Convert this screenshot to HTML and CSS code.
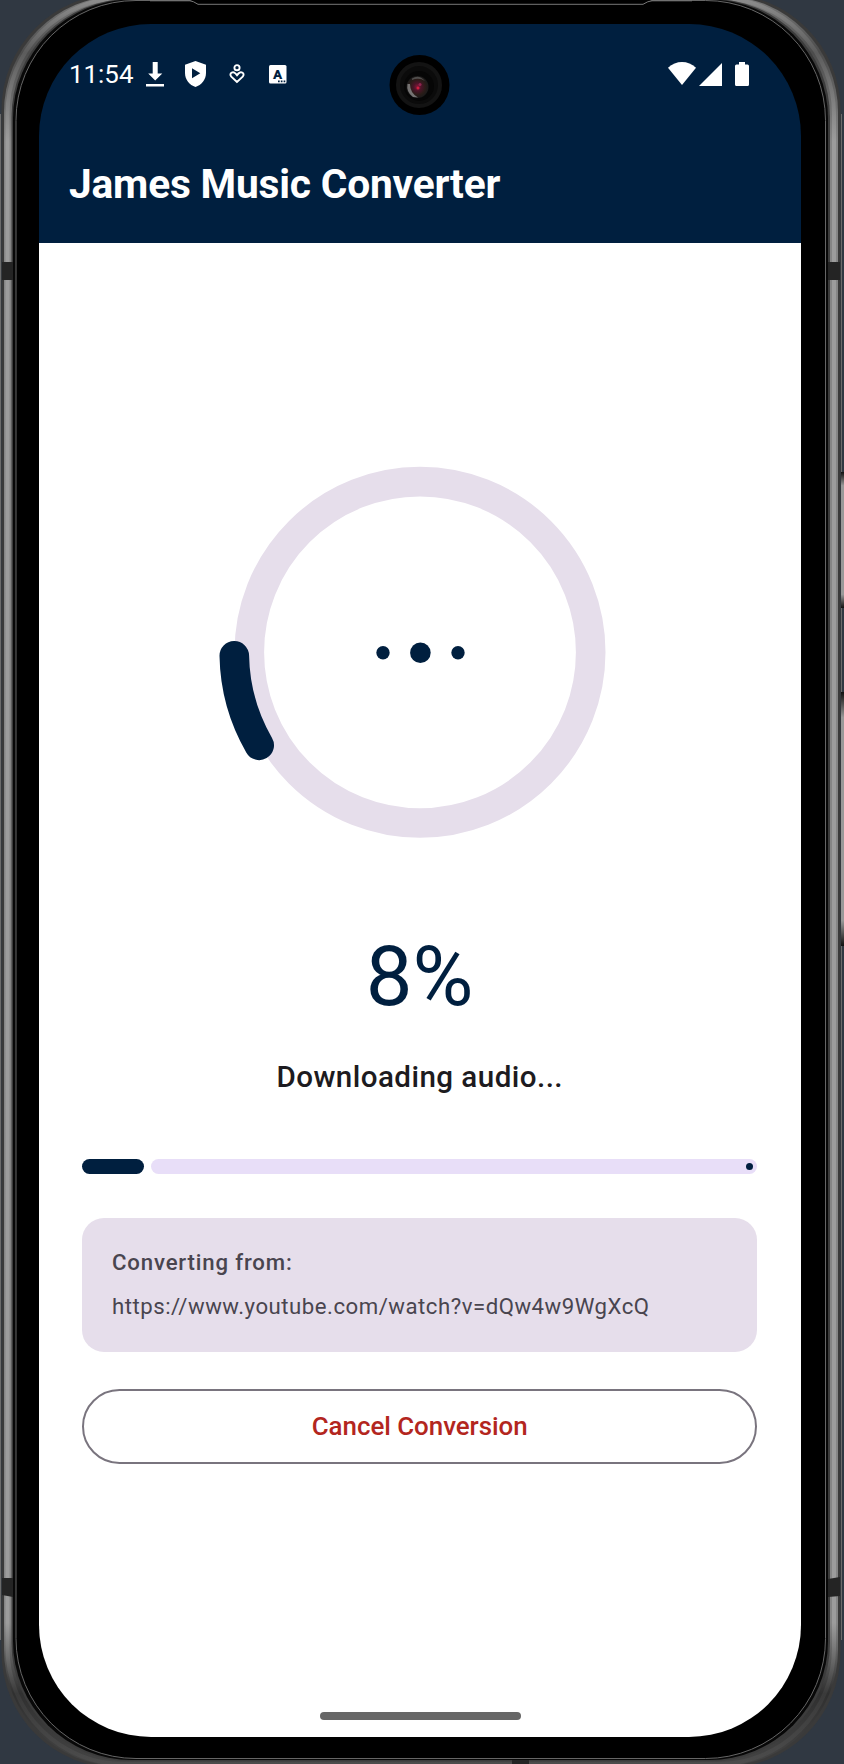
FILE: index.html
```html
<!DOCTYPE html>
<html lang="en">
<head>
<meta charset="utf-8">
<title>James Music Converter</title>
<link rel="stylesheet" href="styles.css">
</head>
<body>
<div class="phone">
  <svg class="frame" viewBox="0 0 844 1764" aria-hidden="true">
    <defs>
      <linearGradient id="metal" gradientUnits="userSpaceOnUse" x1="0" y1="0" x2="0" y2="1764">
        <stop offset="0" stop-color="#777"/><stop offset=".03" stop-color="#4c4c4c"/>
        <stop offset=".08" stop-color="#858585"/><stop offset=".92" stop-color="#858585"/>
        <stop offset=".96" stop-color="#303030"/><stop offset="1" stop-color="#444"/>
      </linearGradient>
      <linearGradient id="shine" gradientUnits="userSpaceOnUse" x1="0" y1="0" x2="0" y2="1764">
        <stop offset="0" stop-color="#8c8c8c"/><stop offset=".03" stop-color="#5c5c5c"/>
        <stop offset=".08" stop-color="#9c9c9c"/><stop offset=".92" stop-color="#9c9c9c"/>
        <stop offset=".96" stop-color="#3a3a3a"/><stop offset="1" stop-color="#4c4c4c"/>
      </linearGradient>
      <linearGradient id="button" x1="0" y1="0" x2="0" y2="1">
        <stop offset="0" stop-color="#111"/><stop offset=".1" stop-color="#999"/>
        <stop offset=".9" stop-color="#999"/><stop offset="1" stop-color="#111"/>
      </linearGradient>
    </defs>
    <path d="M.5 114V1640M841.5 114V1640" stroke="#6b6b6b"/>
    <rect x="841" y="472" width="4" height="136" fill="url(#button)"/>
    <rect x="841" y="692" width="4" height="254" fill="url(#button)"/>
    <rect x="1.5" y="-6" width="839" height="1774" rx="116" fill="#3a3a3a"/>
    <rect x="4" y="-4" width="834" height="1770" rx="116" fill="url(#metal)"/>
    <rect x="7.5" y="-2" width="826.500" height="1766" rx="116" fill="none" stroke="url(#shine)" stroke-width="4"/>
    <rect x="11.500" y="-1" width="818.500" height="1762" rx="118" fill="#3c3c3c"/>
    <rect x="13" y="-.5" width="815" height="1760.500" rx="119" fill="#080808"/>
    <rect x="16" y=".5" width="809.500" height="1758" rx="120" fill="#000" stroke="#666"/>
    <path d="M190 0l8 4H644l8-4z" fill="#000"/>
    <path d="M150 .8H190Q193 1 198 4.300H643Q648 1 652 .8H692" fill="none" stroke="#777"/>
    <path d="M2 262H13V280H2zM828 262H840V280H828zM2 1578H13V1597L2 1595zM828 1579L840 1577V1596L828 1597zM512 1760H529V1764H512z" fill="#242424"/>
  </svg>
  <div class="screen">
    <header class="app-header">
      <div class="status-bar">
        <span class="clock">11:54</span>
        <svg class="ic-download" width="18" height="25" viewBox="0 0 18 25"><path fill="#fff" d="M6.700 0h5v11.500h4.600L9.200 18.500 2.200 11.500h4.500zM0 22h18v2.600H0z"/></svg>
        <svg class="ic-shield" width="21" height="26" viewBox="0 0 21 26"><path fill="#fff" fill-rule="evenodd" d="M10.500 0 21 3.800V12C21 18.500 16.500 24 10.500 26 4.500 24 0 18.500 0 12V3.800zM7 7.300v10L15.300 12.300z"/></svg>
        <svg class="ic-wellbeing" width="16" height="20" viewBox="0 0 16 20"><g fill="none" stroke="#fff" stroke-width="1.900"><circle cx="8" cy="3.700" r="2.600"/><path d="M8 18 2.300 12.700C-.5 9.500 4 6.600 6.500 9.500L8 11.200 9.500 9.500C12 6.600 16.500 9.500 13.700 12.700z"/></g></svg>
        <svg class="ic-letter" width="18" height="19" viewBox="0 0 18 19"><rect width="17.500" height="18.500" rx="1.500" fill="#fff"/><text x="8.500" y="13.700" text-anchor="middle" class="letter">A</text><path fill="#001f3f" d="M9 15.500h1.700v1.700H9zM11.800 15.500h1.700v1.700h-1.700zM14.600 15.500h1.700v1.700h-1.700z"/></svg>
        <span class="spacer"></span>
        <svg class="ic-wifi" width="28" height="23" viewBox="0 0 28 23"><path fill="#fff" d="M0 5.700C8-1.900 20-1.900 28 5.700L14 23z"/></svg>
        <svg class="ic-signal" width="23" height="23" viewBox="0 0 23 23"><path fill="#fff" d="M23 0V23H0z"/></svg>
        <svg class="ic-battery" width="14" height="24" viewBox="0 0 14 24"><path fill="#fff" d="M4 0h6v2.400h2.500q1.500 0 1.500 1.500V22.500q0 1.500-1.500 1.500h-11Q0 24 0 22.500V3.900Q0 2.400 1.500 2.400H4z"/></svg>
      </div>
      <h1 class="title">James Music Converter</h1>
    </header>
    <main class="content">
      <svg class="ring" width="404" height="404" viewBox="0 0 404 404">
        <circle cx="202" cy="202.300" r="170.700" fill="none" stroke="#e6deeb" stroke-width="29.600"/>
        <path d="M16.300 205.800A185.500 185.500 0 0 0 41.200 295.300" fill="none" stroke="#001f3f" stroke-width="29.600" stroke-linecap="round"/>
        <g fill="#001f3f"><circle cx="165" cy="202.700" r="6.700"/><circle cx="202.400" cy="202.700" r="10.300"/><circle cx="240" cy="202.700" r="6.700"/></g>
      </svg>
      <div class="percent">8%</div>
      <div class="stage">Downloading audio...</div>
      <div class="bar"><span class="bar-done"></span><span class="bar-track"><span class="bar-stop"></span></span></div>
      <section class="card">
        <div class="card-label">Converting from:</div>
        <div class="card-url">https://www.youtube.com/watch?v=dQw4w9WgXcQ</div>
      </section>
      <button class="cancel">Cancel Conversion</button>
    </main>
    <div class="home-pill"></div>
  </div>
  <svg class="camera" width="62" height="62" viewBox="0 0 62 62" aria-hidden="true">
    <defs><radialGradient id="lens"><stop offset="0" stop-color="#8b1838"/><stop offset=".35" stop-color="#4a1428"/><stop offset=".7" stop-color="#2a1c18"/><stop offset="1" stop-color="#1a1a1a"/></radialGradient></defs>
    <circle cx="31.500" cy="31" r="30" fill="#000"/><circle cx="31" cy="31" r="21" fill="#0b0b0b" stroke="#131313" stroke-width="4"/>
    <circle cx="31" cy="32" r="15" fill="#060606"/><circle cx="29.500" cy="33" r="11" fill="url(#lens)"/>
    <path d="M19.500 30Q18 38 25 43L30 43.500Q22 39 22 30z" fill="#8a8a8a" opacity=".8"/>
    <path d="M24 24.500Q31 20 37 27Q31 23 24 26z" fill="#777" opacity=".55"/>
    <circle cx="30" cy="34" r="1.500" fill="#d21e40"/><circle cx="32" cy="30.500" r="1.500" fill="#8f2450"/>
  </svg>
</div>
</body>
</html>
```
FILE: styles.css
```css
* { box-sizing: border-box; }
body {
  margin: 0;
  background: #303842;
  font-family: Roboto, "Noto Sans", sans-serif;
}
.phone {
  position: relative;
  height: 1764px;
  padding: 24px 43px 27px 39px;
  overflow: hidden;
}
.frame {
  position: absolute;
  inset: 0;
  width: 844px;
  height: 1764px;
}
.screen {
  position: relative;
  display: flex;
  flex-direction: column;
  width: 762px;
  height: 1713px;
  border-radius: 112px;
  overflow: hidden;
  background: linear-gradient(#001f3f 219px, #fff 219px);
}
.app-header {
  height: 219px;
  padding: 0 30px;
  color: #fff;
}
.status-bar {
  display: flex;
  align-items: flex-start;
  height: 98px;
  padding: 37px 22px 0 0;
}
.status-bar svg { flex: none; }
.clock {
  width: 65px;
  font-size: 25.9px;
  line-height: 26px;
}
.ic-download { margin: 1px 0 0 12px; }
.ic-shield { margin-left: 21px; }
.ic-wellbeing { margin: 3px 0 0 23px; }
.ic-letter { margin: 4px 0 0 24px; }
.letter {
  font: 900 13.5px Roboto, sans-serif;
  fill: #001f3f;
}
.spacer { flex: 1; }
.ic-wifi { margin-top: 1px; }
.ic-signal { margin: 2px 0 0 3px; }
.ic-battery { margin: 1px 0 0 13px; }
.title {
  margin: 38px 0 0;
  font-size: 40.7px;
  line-height: 49px;
  font-weight: 700;
  letter-spacing: -0.2px;
  white-space: nowrap;
}
.content {
  display: flex;
  flex-direction: column;
  align-items: center;
  flex: 1;
  padding: 207px 44px 0 43.4px;
}
.ring { flex: none; }
.percent {
  margin-top: 75px;
  font-size: 83.2px;
  line-height: 96px;
  color: #001f3f;
}
.stage {
  margin-top: 30px;
  font-size: 29.6px;
  line-height: 44px;
  font-weight: 500;
  letter-spacing: 0.44px;
  color: #1d1b20;
}
.bar {
  display: flex;
  gap: 7.4px;
  width: 100%;
  height: 15px;
  margin-top: 60px;
}
.bar-done {
  width: 61.5px;
  border-radius: 8px;
  background: #001f3f;
}
.bar-track {
  display: flex;
  flex: 1;
  align-items: center;
  justify-content: flex-end;
  padding-right: 3.6px;
  border-radius: 8px;
  background: #e8def8;
}
.bar-stop {
  width: 7.4px;
  height: 7.4px;
  border-radius: 50%;
  background: #001f3f;
}
.card {
  display: flex;
  flex-direction: column;
  gap: 14.8px;
  width: 100%;
  height: 134px;
  margin-top: 44px;
  padding: 29.6px;
  border-radius: 22px;
  background: #e6deeb;
  color: #49454f;
  font-size: 22.2px;
  line-height: 29.6px;
}
.card-label {
  font-weight: 500;
  letter-spacing: 0.84px;
}
.card-url { letter-spacing: 0.51px; }
.cancel {
  width: 100%;
  height: 75px;
  margin-top: 37px;
  padding: 0 0 2px;
  border: 2px solid #79747e;
  border-radius: 38px;
  background: transparent;
  color: #b3261e;
  font-family: inherit;
  font-size: 25.9px;
  font-weight: 500;
  letter-spacing: -0.03px;
}
.home-pill {
  align-self: center;
  width: 201px;
  height: 8px;
  margin-bottom: 17px;
  border-radius: 4px;
  background: #676767;
}
.camera {
  position: absolute;
  left: 388px;
  top: 54px;
}
```
